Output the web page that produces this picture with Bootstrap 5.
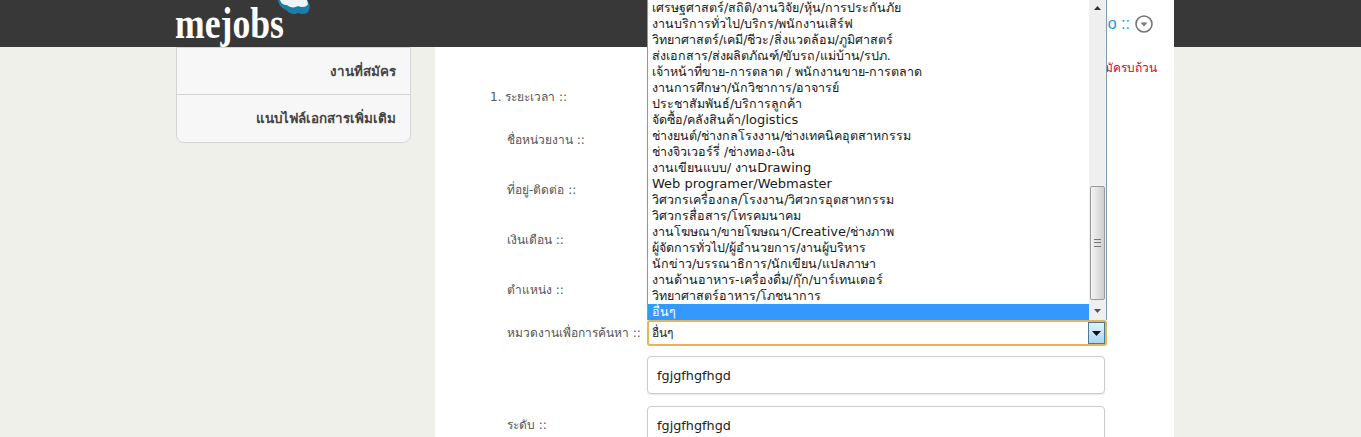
<!DOCTYPE html>
<html lang="th">
<head>
<meta charset="utf-8">
<title>mejobs</title>
<link href="https://cdn.jsdelivr.net/npm/bootstrap@5.3.0/dist/css/bootstrap.min.css" rel="stylesheet">
<style>
html,body{height:437px;overflow:hidden}
body{background:#f0f0eb;font-family:Tahoma,"DejaVu Sans","Noto Sans",sans-serif;color:#555;font-size:12px}
.topbar{background:#383838;height:47px;padding:0}
.shell{margin-left:176px;width:998px}
.topinner{height:47px}
.brand{width:140px;height:47px;position:relative}
.brandtext{display:block;font:700 44px/47px "Liberation Serif",serif;color:#fff;transform:scaleX(.81);transform-origin:left;margin:0 0 0 -1px}
.cloudmark{position:absolute;left:100px;top:0}
.userbox{background:#fff;width:260px;height:47px;color:#1b9ad6;font:16px "Liberation Sans","DejaVu Sans",sans-serif;padding-right:20px}
.sidecol{width:235px;flex:none}
.sidelist{background:#f7f7f7;border:1px solid #d4d4d4;border-radius:0 0 8px 8px}
.sideitem{height:47px;line-height:48px;text-align:right;padding-right:14px;font-weight:700;color:#444;border-bottom:1px solid #d4d4d4;font-size:13.4px}
.sideitem:last-child{border-bottom:0}
.maincol{margin-left:24px;width:739px;background:#fff;height:400px;padding-right:17px}
.notice{color:#e0001b;text-align:right;height:15px;line-height:15px;margin-top:14px}
.headline{margin:14px 0 0 55px;height:15px;line-height:15px}
.formrow{display:flex;align-items:center;margin-left:72px;margin-bottom:12px}
.formlabel{width:140px;flex:none}
.fieldbox{width:458px;height:38px;border:1px solid #ccc;border-radius:4px;padding:0 9px;font:12.8px "DejaVu Sans",sans-serif;color:#222;box-shadow:0 1px 2px rgba(0,0,0,.1)}
.rowfirst{margin-top:16px}
.rowselect{margin-top:-1px;margin-bottom:10px}
.selectwrap{position:relative;width:460px;height:26px;border:2px solid #e8b45a;border-radius:3px;background:#fff;font:12px/22px "DejaVu Sans",sans-serif;color:#222;padding-left:3px}
.selectbtn{position:absolute;right:0;top:0;width:17px;height:22px;border:1px solid #4a7a9a;background:linear-gradient(#e3f1fb,#a9d6f4)}
.listpop{position:absolute;left:-2px;bottom:24px;width:460px;height:320px;background:#fff;border-left:1px solid #7f9db9;border-right:1px solid #7f9db9;z-index:1050;overflow:hidden}
.listrows{width:442px}
.listitem{height:16px;padding-left:4px;font:12.5px/16px "DejaVu Sans",sans-serif;color:#1a1a1a;white-space:nowrap}
.listitem.picked{background:#3399ff;color:#fff}
.latinpart{font-size:13px}
.trackbar{position:absolute;right:0;top:0;width:17px;height:320px;background:#efefef}
.arrowbtn{position:absolute;left:5px}
.arrowup{top:6px}
.arrowdown{top:309px}
.thumbbar{position:absolute;left:1px;top:186px;width:15px;height:114px;border:1px solid #9a9a9a;border-radius:2px;background:linear-gradient(90deg,#f4f4f4,#cfcfcf)}
.gripline{position:absolute;left:3px;top:52px;width:7px;height:8px;border-top:1px solid #777;border-bottom:1px solid #777}
.gripline::after{content:"";position:absolute;left:0;right:0;top:2px;height:2px;border-top:1px solid #777}
</style>
</head>
<body>
<nav class="navbar topbar">
  <div class="shell d-flex align-items-start topinner">
    <div class="brand">
      <span class="brandtext">mejobs</span>
      <svg class="cloudmark" width="36" height="18" viewBox="0 0 36 18"><path d="M2 0c1 6 4 8 8 10 4 4 8 5 12 3 5 2 10 1 11-3 2-4 0-8-3-10z" fill="#1d7fa8"/><path d="M4 0c1 3 3 5 7 5 3 3 8 3 11 1 4 2 9 1 10-2l-1-4z" fill="#eef6fa"/></svg>
    </div>
    <div class="userbox ms-auto d-flex align-items-center justify-content-end gap-1">
      <span>สวัสดี foo ::</span>
      <svg width="20" height="20" viewBox="0 0 20 20"><circle cx="10" cy="10" r="8" fill="#fff" stroke="#777" stroke-width="1.6"/><path d="M6.500 8.500h7L10 12.500z" fill="#777"/></svg>
    </div>
  </div>
</nav>
<div class="shell d-flex">
  <aside class="sidecol">
    <div class="sidelist">
      <div class="sideitem">งานที่สมัคร</div>
      <div class="sideitem">แนบไฟล์เอกสารเพิ่มเติม</div>
    </div>
  </aside>
  <main class="maincol">
    <div class="notice">กรุณากรอกข้อมูลการสมัครบถ้วน</div>
    <div class="headline">1. ระยะเวลา ::</div>
    <div class="formrow rowfirst"><div class="formlabel">ชื่อหน่วยงาน ::</div><div class="fieldbox"></div></div>
    <div class="formrow"><div class="formlabel">ที่อยู่-ติดต่อ ::</div><div class="fieldbox"></div></div>
    <div class="formrow"><div class="formlabel">เงินเดือน ::</div><div class="fieldbox"></div></div>
    <div class="formrow"><div class="formlabel">ตำแหน่ง ::</div><div class="fieldbox"></div></div>
    <div class="formrow rowselect">
      <div class="formlabel">หมวดงานเพื่อการค้นหา ::</div>
      <div class="selectwrap">อื่นๆ
        <div class="selectbtn d-flex align-items-center justify-content-center"><svg width="9" height="5" viewBox="0 0 9 5"><path d="M0 0h9L4.500 5z" fill="#111"/></svg></div>
        <div class="listpop">
          <div class="listrows">
            <div class="listitem">เศรษฐศาสตร์/สถิติ/งานวิจัย/หุ้น/การประกันภัย</div>
            <div class="listitem">งานบริการทั่วไป/บริกร/พนักงานเสิร์ฟ</div>
            <div class="listitem">วิทยาศาสตร์/เคมี/ชีวะ/สิ่งแวดล้อม/ภูมิศาสตร์</div>
            <div class="listitem">ส่งเอกสาร/ส่งผลิตภัณฑ์/ขับรถ/แม่บ้าน/รปภ.</div>
            <div class="listitem">เจ้าหน้าที่ขาย-การตลาด / พนักงานขาย-การตลาด</div>
            <div class="listitem">งานการศึกษา/นักวิชาการ/อาจารย์</div>
            <div class="listitem">ประชาสัมพันธ์/บริการลูกค้า</div>
            <div class="listitem">จัดซื้อ/คลังสินค้า/<span class="latinpart">logistics</span></div>
            <div class="listitem">ช่างยนต์/ช่างกลโรงงาน/ช่างเทคนิคอุตสาหกรรม</div>
            <div class="listitem">ช่างจิวเวอร์รี่ /ช่างทอง-เงิน</div>
            <div class="listitem">งานเขียนแบบ/ งาน<span class="latinpart">Drawing</span></div>
            <div class="listitem"><span class="latinpart">Web programer/Webmaster</span></div>
            <div class="listitem">วิศวกรเครื่องกล/โรงงาน/วิศวกรอุตสาหกรรม</div>
            <div class="listitem">วิศวกรสื่อสาร/โทรคมนาคม</div>
            <div class="listitem">งานโฆษณา/ขายโฆษณา/<span class="latinpart">Creative</span>/ช่างภาพ</div>
            <div class="listitem">ผู้จัดการทั่วไป/ผู้อำนวยการ/งานผู้บริหาร</div>
            <div class="listitem">นักข่าว/บรรณาธิการ/นักเขียน/แปลภาษา</div>
            <div class="listitem">งานด้านอาหาร-เครื่องดื่ม/กุ๊ก/บาร์เทนเดอร์</div>
            <div class="listitem">วิทยาศาสตร์อาหาร/โภชนาการ</div>
            <div class="listitem picked">อื่นๆ</div>
          </div>
          <div class="trackbar">
            <svg class="arrowbtn arrowup" width="7" height="4" viewBox="0 0 7 4"><path d="M0 4h7L3.500 0z" fill="#333"/></svg>
            <div class="thumbbar"><div class="gripline"></div></div>
            <svg class="arrowbtn arrowdown" width="7" height="4" viewBox="0 0 7 4"><path d="M0 0h7L3.500 4z" fill="#555"/></svg>
          </div>
        </div>
      </div>
    </div>
    <div class="formrow"><div class="formlabel"></div><div class="fieldbox d-flex align-items-center">fgjgfhgfhgd</div></div>
    <div class="formrow"><div class="formlabel">ระดับ ::</div><div class="fieldbox d-flex align-items-center">fgjgfhgfhgd</div></div>
  </main>
</div>
<script src="https://cdn.jsdelivr.net/npm/bootstrap@5.3.0/dist/js/bootstrap.bundle.min.js"></script>
</body>
</html>
